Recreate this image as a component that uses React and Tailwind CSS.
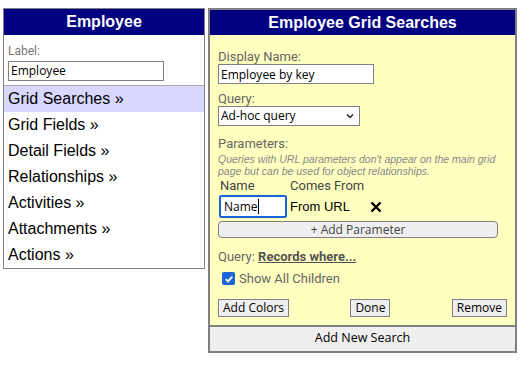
import React from "react";

const menu = ["Grid Searches", "Grid Fields", "Detail Fields", "Relationships", "Activities", "Attachments", "Actions"];

const arial = { fontFamily: "'Liberation Sans', Arial, sans-serif" };

export default function App() {
    return (
        <div className="w-[529px] h-[376px] bg-white flex items-start gap-[3px] pl-[3px] pt-[8px] font-['Liberation_Sans',Arial,sans-serif]">
            {/* left panel */}
            <div className="w-[202px] border border-[#808080] flex flex-col">
                <div className="h-[26px] bg-[#000080] text-white font-bold text-[16px] flex items-center justify-center">Employee</div>
                <div className="px-[4px] pt-[10px] pb-[3px] border-b border-[#aaaaaa]">
                    <div className="text-[12px] leading-[13px] text-[#777] font-['Roboto',sans-serif]">Label:</div>
                    <input
                        defaultValue="Employee"
                        className="mt-[1px] w-[156px] h-[20px] border border-[#808080] px-[2px] text-[12px] text-black font-['Open_Sans',sans-serif] outline-none"
                    />
                </div>
                {menu.map((m, i) => (
                    <div key={m} className={`h-[26px] px-[4px] flex items-center text-[16px] text-black ${i === 0 ? "bg-[#d8d8ff]" : ""}`}>
                        {m} »
                    </div>
                ))}
            </div>

            {/* right panel */}
            <div className="w-[309px] border-2 border-[#808080] flex flex-col">
                <div className="h-[25px] bg-[#000080] text-white font-bold text-[16px] flex items-center justify-center">Employee Grid Searches</div>
                <div className="bg-[#ffffc0] px-[8px] pt-[14px] pb-[8px] flex flex-col">
                    <div className="text-[13px] leading-[15px] text-[#666] font-['Roboto',sans-serif]">Display Name:</div>
                    <input
                        defaultValue="Employee by key"
                        className="w-[156px] h-[20px] bg-white border border-[#808080] px-[2px] text-[12px] text-black font-['Open_Sans',sans-serif] outline-none"
                    />
                    <div className="mt-[7px] text-[13px] leading-[15px] text-[#666] font-['Roboto',sans-serif]">Query:</div>
                    <div className="w-[142px] h-[20px] bg-white border border-[#808080] px-[2px] flex items-center justify-between text-[12px] text-black font-['Open_Sans',sans-serif]">
                        <span>Ad-hoc query</span>
                        <svg width="10" height="10" viewBox="0 0 10 10" className="mr-[2px]">
                            <path d="M2 3.5 L5 6.5 L8 3.5" stroke="#222" strokeWidth="1.4" fill="none" />
                        </svg>
                    </div>
                    <div className="mt-[10px] text-[13px] leading-[15px] text-[#666] font-['Roboto',sans-serif]">Parameters:</div>
                    <div className="mt-[2px] text-[10.5px] leading-[12px] italic text-[#888]" style={arial}>
                        Queries with URL parameters don't appear on the main grid page but can be used for object relationships.
                    </div>
                    <div className="mt-[1px] flex text-[13px] leading-[15px] text-[#444] font-['Roboto',sans-serif]">
                        <span className="w-[70px] pl-[2px]">Name</span>
                        <span className="pl-[2px]">Comes From</span>
                    </div>
                    <div className="mt-[2px] flex items-center">
                        <div className="ml-[1px] w-[68px] h-[23px] border-2 border-[#1a66d9] rounded-[2px] bg-white flex items-center px-[3px] text-[12px] text-black font-['Open_Sans',sans-serif]">
                            Name<span className="w-px h-[15px] bg-black" />
                        </div>
                        <span className="ml-[3px] text-[13px] text-black">From URL</span>
                        <svg width="12" height="12" viewBox="0 0 12 12" className="ml-[20px]">
                            <path d="M1.5 1.5 L10.5 10.5 M10.5 1.5 L1.5 10.5" stroke="#000" strokeWidth="2.4" />
                        </svg>
                    </div>
                    <div className="mt-[3px] w-[280px] h-[17px] border border-[#808080] rounded-[4px] bg-[#efefef] flex items-center justify-center text-[12px] text-[#444] font-['Open_Sans',sans-serif]">
                        + Add Parameter
                    </div>
                    <div className="mt-[11px] text-[13px] leading-[15px] text-[#666] font-['Roboto',sans-serif]">
                        Query: <span className="font-bold underline text-[#555]">Records where...</span>
                    </div>
                    <div className="mt-[5px] flex items-center pl-[4px]">
                        <span className="w-[13px] h-[13px] rounded-[2px] bg-[#1a66d9] flex items-center justify-center">
                            <svg width="10" height="10" viewBox="0 0 10 10">
                                <path d="M1.8 5.2 L4 7.4 L8.3 2.6" stroke="#fff" strokeWidth="1.7" fill="none" />
                            </svg>
                        </span>
                        <span className="ml-[4px] text-[13px] text-[#666] font-['Roboto',sans-serif]">Show All Children</span>
                    </div>
                    <div className="mt-[10px] flex justify-between">
                        {["Add Colors", "Done", "Remove"].map((b) => (
                            <div key={b} className="h-[18px] px-[4px] border border-[#808080] bg-[#efefef] flex items-center text-[12px] text-black font-['Open_Sans',sans-serif]">
                                {b}
                            </div>
                        ))}
                    </div>
                </div>
                <div className="h-[26px] border-t-2 border-[#808080] bg-[#efefef] flex items-center justify-center text-[12.5px] text-black font-['Open_Sans',sans-serif]">
                    Add New Search
                </div>
            </div>
        </div>
    );
}
